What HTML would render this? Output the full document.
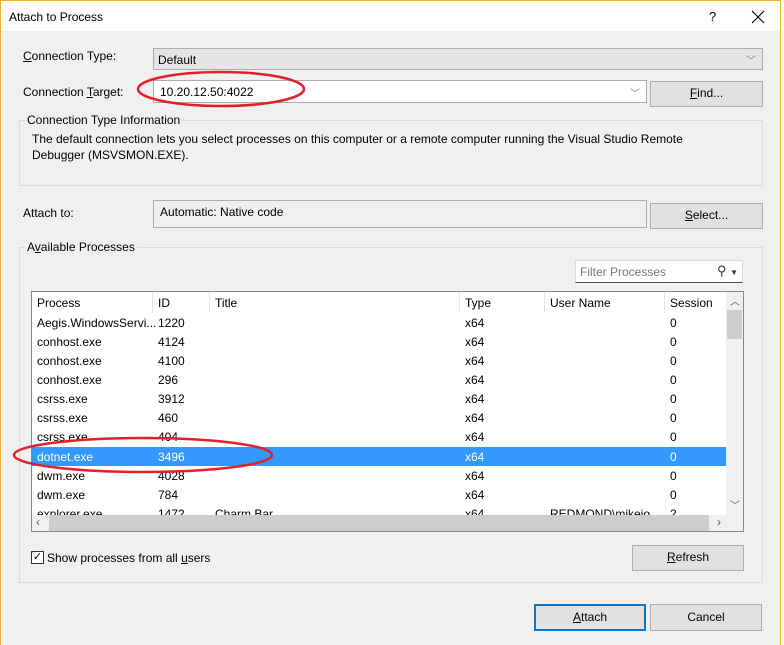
<!DOCTYPE html>
<html><head><meta charset="utf-8"><style>
*{box-sizing:border-box;margin:0;padding:0}
body{width:784px;height:645px;background:#fff;font-family:"Liberation Sans",sans-serif;font-size:12px;color:#000;position:relative;overflow:hidden}
.a{position:absolute;white-space:nowrap}
.win{position:absolute;left:0;top:0;width:781px;height:645px;border:1px solid #f0b030;border-bottom:none;background:#f0f0f0}
.tb{position:absolute;left:0;top:0;width:779px;height:30px;background:#fff}
.btn{position:absolute;background:#e1e1e1;border:1px solid #adadad;text-align:center;line-height:23px}
.grp{position:absolute;border:1px solid #dcdcdc}
.row{position:absolute;left:31px;width:694px;height:19px}
.row span{position:absolute;top:3px}
u{text-decoration:underline}
</style></head><body>
<div class="win">
<div class="tb"></div>
<div class="a" style="left:8px;top:9px">Attach to Process</div>
<div class="a" style="left:708px;top:8px;font-size:13px">?</div>
<svg class="a" style="left:750px;top:9px" width="14" height="14"><path d="M1 1L13 13M13 1L1 13" stroke="#000" stroke-width="1.1" fill="none"/></svg>

<div class="a" style="left:22px;top:48px"><u>C</u>onnection Type:</div>
<div class="a" style="left:152px;top:47px;width:610px;height:22px;background:#e5e5e5;border:1px solid #acacac"><span class="a" style="left:4px;top:4px">Default</span><span class="a" style="right:6px;top:3px;color:#777;font-size:10px">﹀</span></div>

<div class="a" style="left:22px;top:84px">Connection <u>T</u>arget:</div>
<div class="a" style="left:152px;top:79px;width:494px;height:23px;background:#fff;border:1px solid #acacac"><span class="a" style="left:6px;top:4px">10.20.12.50:4022</span><span class="a" style="right:6px;top:4px;color:#777;font-size:10px">﹀</span></div>
<div class="btn" style="left:649px;top:80px;width:113px;height:26px"><u>F</u>ind...</div>

<div class="grp" style="left:18px;top:119px;width:744px;height:66px"></div>
<div class="a" style="left:24px;top:112px;background:#f0f0f0;padding:0 2px">Connection Type Information</div>
<div class="a" style="left:31px;top:131px">The default connection lets you select processes on this computer or a remote computer running the Visual Studio Remote</div>
<div class="a" style="left:31px;top:147px">Debugger (MSVSMON.EXE).</div>

<div class="a" style="left:22px;top:205px">Attach to:</div>
<div class="a" style="left:152px;top:199px;width:494px;height:28px;background:#f0f0f0;border:1px solid #acacac"><span class="a" style="left:6px;top:4px">Automatic: Native code</span></div>
<div class="btn" style="left:649px;top:202px;width:113px;height:26px"><u>S</u>elect...</div>

<div class="grp" style="left:18px;top:246px;width:744px;height:336px"></div>
<div class="a" style="left:24px;top:239px;background:#f0f0f0;padding:0 2px">A<u>v</u>ailable Processes</div>
<div class="a" style="left:574px;top:259px;width:168px;height:23px;background:#fff;border:1px solid #dcdcdc;border-bottom:1px solid #555"><span class="a" style="left:4px;top:4px;color:#777">Filter Processes</span><span class="a" style="right:4px;top:2px;color:#333;font-size:13px">⚲ <span style="font-size:8px">▼</span></span></div>

<div class="a" style="left:30px;top:290px;width:713px;height:241px;background:#fff;border:1px solid #828790;overflow:hidden">
<div class="a" style="left:0;top:0;width:694px;height:21px">
<span class="a" style="left:5px;top:4px">Process</span><span class="a" style="left:126px;top:4px">ID</span><span class="a" style="left:183px;top:4px">Title</span><span class="a" style="left:433px;top:4px">Type</span><span class="a" style="left:518px;top:4px">User Name</span><span class="a" style="left:638px;top:4px">Session</span>
<div class="a" style="left:120px;top:0;width:1px;height:21px;background:#e5e5e5"></div><div class="a" style="left:177px;top:0;width:1px;height:21px;background:#e5e5e5"></div><div class="a" style="left:427px;top:0;width:1px;height:21px;background:#e5e5e5"></div><div class="a" style="left:512px;top:0;width:1px;height:21px;background:#e5e5e5"></div><div class="a" style="left:632px;top:0;width:1px;height:21px;background:#e5e5e5"></div>
</div>
</div>
<div class="row" style="top:312px"><span style="left:5px">Aegis.WindowsServi...</span><span style="left:126px">1220</span><span style="left:433px">x64</span><span style="left:638px">0</span></div>
<div class="row" style="top:331px"><span style="left:5px">conhost.exe</span><span style="left:126px">4124</span><span style="left:433px">x64</span><span style="left:638px">0</span></div>
<div class="row" style="top:350px"><span style="left:5px">conhost.exe</span><span style="left:126px">4100</span><span style="left:433px">x64</span><span style="left:638px">0</span></div>
<div class="row" style="top:369px"><span style="left:5px">conhost.exe</span><span style="left:126px">296</span><span style="left:433px">x64</span><span style="left:638px">0</span></div>
<div class="row" style="top:388px"><span style="left:5px">csrss.exe</span><span style="left:126px">3912</span><span style="left:433px">x64</span><span style="left:638px">0</span></div>
<div class="row" style="top:407px"><span style="left:5px">csrss.exe</span><span style="left:126px">460</span><span style="left:433px">x64</span><span style="left:638px">0</span></div>
<div class="row" style="top:426px"><span style="left:5px">csrss.exe</span><span style="left:126px">404</span><span style="left:433px">x64</span><span style="left:638px">0</span></div>
<div class="row" style="top:446px;background:#3399ff;color:#fff"><span style="left:5px">dotnet.exe</span><span style="left:126px">3496</span><span style="left:433px">x64</span><span style="left:638px">0</span></div>
<div class="row" style="top:465px"><span style="left:5px">dwm.exe</span><span style="left:126px">4028</span><span style="left:433px">x64</span><span style="left:638px">0</span></div>
<div class="row" style="top:484px"><span style="left:5px">dwm.exe</span><span style="left:126px">784</span><span style="left:433px">x64</span><span style="left:638px">0</span></div>
<div class="row" style="top:503px;height:11px;overflow:hidden"><span style="left:5px">explorer.exe</span><span style="left:126px">1472</span><span style="left:183px">Charm Bar</span><span style="left:433px">x64</span><span style="left:518px">REDMOND\mikejo</span><span style="left:638px">2</span></div>
<div class="a" style="left:31px;top:514px;width:694px;height:16px;background:#f0f0f0"><div class="a" style="left:17px;top:0;width:660px;height:16px;background:#cdcdcd"></div><span class="a" style="left:4px;top:0;color:#555">‹</span><span class="a" style="right:5px;top:0;color:#555">›</span></div>
<div class="a" style="left:725px;top:291px;width:17px;height:239px;background:#f0f0f0"><div class="a" style="left:1px;top:18px;width:15px;height:29px;background:#cdcdcd"></div><span class="a" style="left:4px;top:1px;color:#555;font-size:10px">︿</span><span class="a" style="left:4px;top:205px;color:#555;font-size:10px">﹀</span></div>

<div class="a" style="left:30px;top:550px;width:13px;height:13px;border:1px solid #333;background:#fff;font-size:11px;line-height:11px;text-align:center">✓</div>
<div class="a" style="left:46px;top:550px">Show processes from all <u>u</u>sers</div>
<div class="btn" style="left:631px;top:544px;width:112px;height:26px"><u>R</u>efresh</div>

<div class="btn" style="left:533px;top:603px;width:112px;height:27px;border:2px solid #0078d7;line-height:23px"><u>A</u>ttach</div>
<div class="btn" style="left:649px;top:603px;width:112px;height:27px;line-height:25px">Cancel</div>
</div>
<svg class="a" style="left:0;top:0" width="784" height="645"><ellipse cx="221" cy="89" rx="83" ry="17" fill="none" stroke="#e0202a" stroke-width="2.5"/><ellipse cx="143" cy="455" rx="129" ry="17" fill="none" stroke="#e0202a" stroke-width="2.5"/></svg>
</body></html>
